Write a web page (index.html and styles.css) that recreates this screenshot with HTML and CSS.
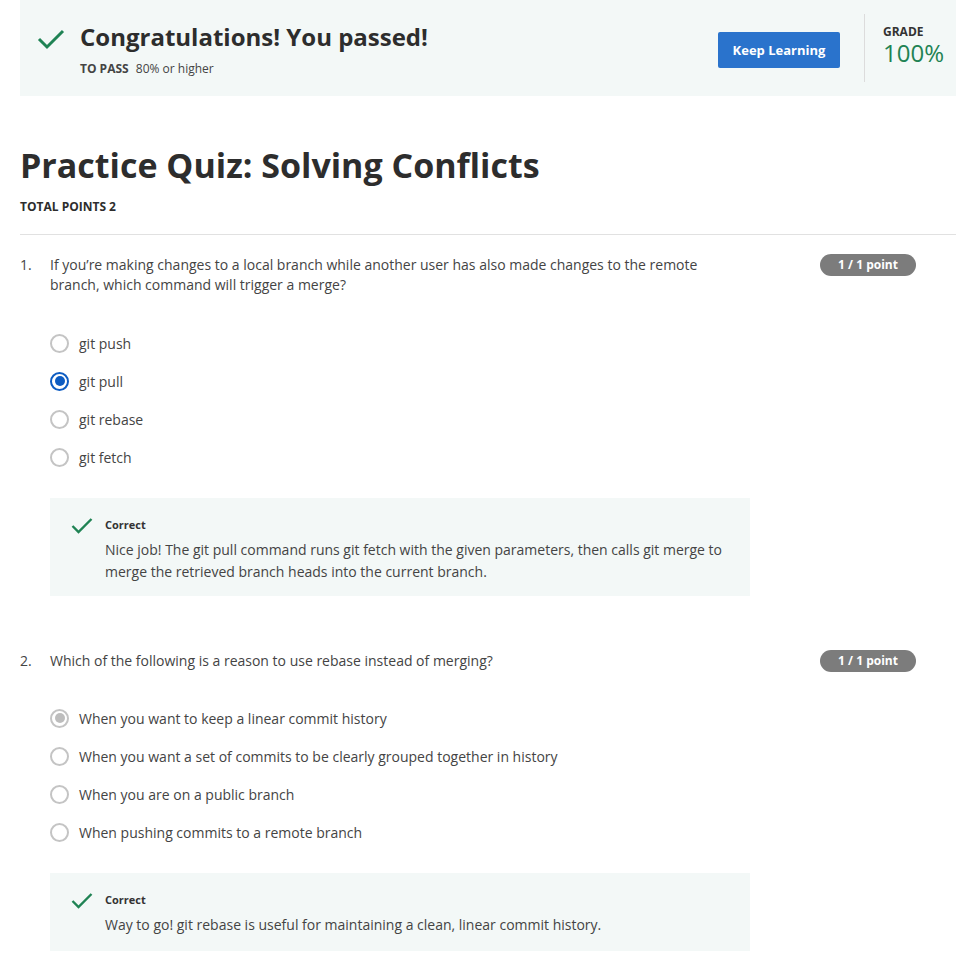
FILE: index.html
```html
<!DOCTYPE html>
<html>
<head>
<meta charset="utf-8">
<link rel="stylesheet" href="styles.css">
</head>
<body>
<div class="page">
  <div class="banner">
    <div class="banner-main">
      <svg class="banner-check" width="28" height="22" viewBox="0 0 28 22"><path d="M2 11 L10 19 L26 3" fill="none" stroke="#1f8354" stroke-width="3"/></svg>
      <div class="banner-text">
        <div class="banner-title">Congratulations! You passed!</div>
        <div class="banner-sub"><b>TO PASS</b> 80% or higher</div>
      </div>
    </div>
    <button class="keep-btn">Keep Learning</button>
    <div class="grade">
      <div class="grade-label">GRADE</div>
      <div class="grade-value">100%</div>
    </div>
  </div>

  <h1 class="quiz-title">Practice Quiz: Solving Conflicts</h1>
  <div class="total">TOTAL POINTS 2</div>
  <hr class="rule">

  <div class="question">
    <div class="q-head">
      <span class="q-num">1.</span>
      <div class="q-text">If you’re making changes to a local branch while another user has also made changes to the remote branch, which command will trigger a merge?</div>
      <span class="badge">1 / 1 point</span>
    </div>
    <ul class="options">
      <li><span class="radio"></span>git push</li>
      <li><span class="radio checked"></span>git pull</li>
      <li><span class="radio"></span>git rebase</li>
      <li><span class="radio"></span>git fetch</li>
    </ul>
    <div class="feedback">
      <svg class="fb-check" width="22" height="18" viewBox="0 0 22 18"><path d="M1.5 9 L7.5 15 L20.5 2" fill="none" stroke="#1f8354" stroke-width="2.4"/></svg>
      <div class="fb-body">
        <div class="fb-title">Correct</div>
        <div class="fb-text">Nice job! The git pull command runs git fetch with the given parameters, then calls git merge to merge the retrieved branch heads into the current branch.</div>
      </div>
    </div>
  </div>

  <div class="question q2">
    <div class="q-head">
      <span class="q-num">2.</span>
      <div class="q-text">Which of the following is a reason to use rebase instead of merging?</div>
      <span class="badge">1 / 1 point</span>
    </div>
    <ul class="options">
      <li><span class="radio muted"></span>When you want to keep a linear commit history</li>
      <li><span class="radio"></span>When you want a set of commits to be clearly grouped together in history</li>
      <li><span class="radio"></span>When you are on a public branch</li>
      <li><span class="radio"></span>When pushing commits to a remote branch</li>
    </ul>
    <div class="feedback short">
      <svg class="fb-check" width="22" height="18" viewBox="0 0 22 18"><path d="M1.5 9 L7.5 15 L20.5 2" fill="none" stroke="#1f8354" stroke-width="2.4"/></svg>
      <div class="fb-body">
        <div class="fb-title">Correct</div>
        <div class="fb-text">Way to go! git rebase is useful for maintaining a clean, linear commit history.</div>
      </div>
    </div>
  </div>
</div>
</body>
</html>
```

FILE: styles.css
```css
* { box-sizing: border-box; }
body {
  margin: 0;
  font-family: "Open Sans", "Liberation Sans", sans-serif;
  color: #373a3c;
  background: #fff;
}
.page { padding: 0 20px; }

.banner {
  display: flex;
  align-items: center;
  background: #f3f8f7;
  height: 96px;
  padding: 0 12px 0 17px;
}
.banner-main { display: flex; align-items: flex-start; flex: 1; margin-top: 1px; }
.banner-check { margin-top: 7px; margin-right: 15px; }
.banner-title {
  font-size: 24px;
  font-weight: 700;
  color: #2d2d2d;
  line-height: 32px;
}
.banner-sub { font-size: 12px; color: #444; margin-top: 7px; }
.banner-sub b { font-weight: 700; margin-right: 4px; }
.keep-btn {
  background: #2a73cc;
  color: #fff;
  border: none;
  border-radius: 2px;
  font-family: inherit;
  font-weight: 700;
  font-size: 13px;
  width: 122px;
  height: 36px;
  padding: 0;
  margin-top: 4px;
}
.grade {
  margin-left: 24px;
  border-left: 1px solid #dcdcdc;
  height: 68px;
  padding-left: 18px;
  padding-top: 10px;
}
.grade-label { font-size: 12px; font-weight: 700; color: #333; line-height: 16px; }
.grade-value { font-size: 24px; color: #1f8354; line-height: 26px; }

.quiz-title {
  font-size: 34px;
  font-weight: 700;
  color: #2d2d2d;
  margin: 44px 0 0;
  line-height: 50px;
}
.total { font-size: 12px; font-weight: 700; color: #2d2d2d; margin-top: 8px; }
.rule { border: none; border-top: 1px solid #e1e1e1; margin: 19px 0 0; }

.question { padding-top: 20px; }
.q2 { padding-top: 55px; }
.q-head { display: flex; align-items: flex-start; font-size: 14px; line-height: 20px; color: #444; }
.q-num { width: 30px; flex: none; }
.q-text { width: 660px; }
.badge {
  margin-left: auto;
  margin-right: 40px;
  background: #7c7c7c;
  color: #fff;
  font-size: 12px;
  font-weight: 700;
  border-radius: 11px;
  width: 96px;
  height: 22px;
  line-height: 22px;
  text-align: center;
  margin-top: -1px;
}
.options { list-style: none; margin: 0; padding: 0 0 0 30px; }
.options li {
  display: flex;
  align-items: center;
  height: 38px;
  font-size: 14px;
  color: #444;
}
.question:not(.q2) .options { margin-top: 29px; }
.q2 .options { margin-top: 27px; }
.radio {
  width: 19px;
  height: 19px;
  border: 2px solid #c4c4c4;
  border-radius: 50%;
  margin-right: 10px;
  flex: none;
  position: relative;
}
.radio.checked { border-color: #0d5cc2; }
.radio.checked::after, .radio.muted::after {
  content: "";
  position: absolute;
  left: 2.5px; top: 2.5px;
  width: 10px; height: 10px;
  border-radius: 50%;
  background: #0d5cc2;
}
.radio.muted::after { background: #bdbdbd; }

.feedback {
  display: flex;
  margin: 22px 0 0 30px;
  width: 700px;
  background: #f3f8f7;
  padding: 18px 20px 13px 21px;
}
.q2 .feedback { padding-bottom: 15px; }
.fb-check { margin-top: 1px; margin-right: 12px; flex: none; }
.fb-title { font-size: 11px; font-weight: 700; color: #333; line-height: 18px; }
.fb-text { font-size: 14px; color: #444; line-height: 22px; margin-top: 5px; }
```
